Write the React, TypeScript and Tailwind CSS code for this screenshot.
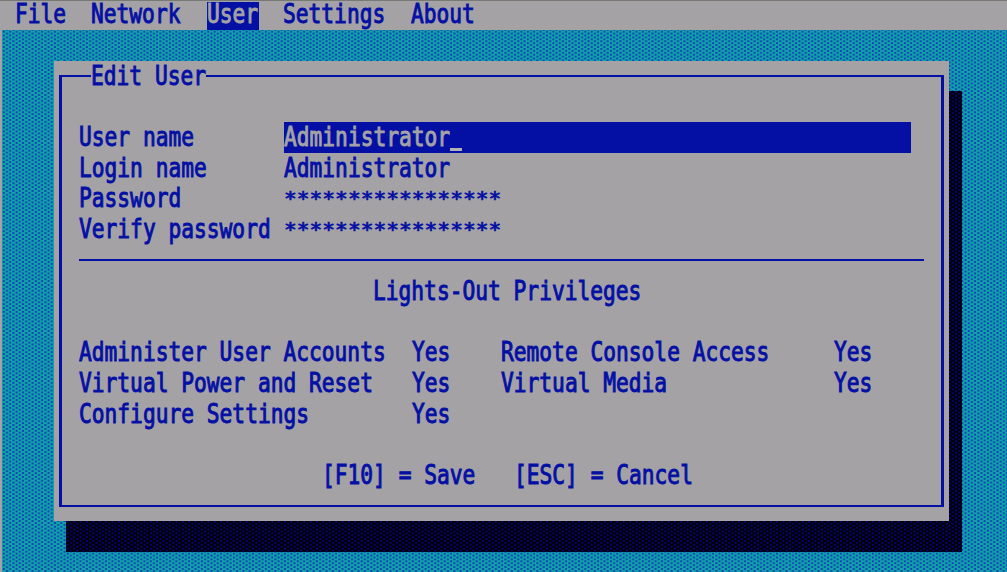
import React from "react";

const CELL = 12.78;

function T({ children, className = "" }: { children: string; className?: string }) {
  const masked = children.startsWith("*");
  return (
    <span className={`block h-[30.7px] shrink-0 ${className}`} style={{ width: children.length * CELL }}>
      <span
        className={`block whitespace-pre font-['DejaVu_Sans_Mono',monospace] text-[26.5px] leading-[27.5px] tracking-[0.02px] [-webkit-text-stroke:1px_currentColor] ${
          masked ? "origin-top-left translate-y-[4.5px] scale-x-[0.8] scale-y-[0.72]" : "origin-left scale-x-[0.8]"
        }`}
      >
        {children}
      </span>
    </span>
  );
}

function Dither({ id, base, dot }: { id: string; base: string; dot: string }) {
  return (
    <svg className="absolute inset-0 h-full w-full" aria-hidden="true">
      <defs>
        <pattern id={id} width="6.39" height="3.838" patternUnits="userSpaceOnUse">
          <rect width="6.39" height="3.838" fill={base} />
          <rect x="0.8" y="0" width="2" height="1.92" fill={dot} />
          <rect x="4" y="1.92" width="2" height="1.92" fill={dot} />
        </pattern>
      </defs>
      <rect width="100%" height="100%" fill={`url(#${id})`} />
    </svg>
  );
}

const fields = [
  ["User name", "Administrator"],
  ["Login name", "Administrator"],
  ["Password", "*****************"],
  ["Verify password", "*****************"],
];

const privileges = [
  ["Administer User Accounts", "Remote Console Access"],
  ["Virtual Power and Reset", "Virtual Media"],
  ["Configure Settings", ""],
];

export default function App() {
  return (
    <div className="relative h-[572px] w-[1007px] overflow-hidden bg-[#a4a2a4] text-[#0410a4]">
      <div className="absolute inset-y-0 right-0 left-[2px]">
        <Dither id="desktop" base="#10a4a8" dot="#1040b8" />
      </div>
      <nav className="relative flex h-[30px] border-t border-[#777a74] bg-[#a4a2a4] pl-[14.5px]">
        <T className="-mt-[1px]">File</T>
        <T className="-mt-[1px] ml-[25.6px]">Network</T>
        <div className="mt-px ml-[26.4px] h-[28px] w-[51.5px] bg-[#0410a4] text-[#a4a2a4]"><T className="-mt-[2px]">User</T></div>
        <T className="-mt-[1px] ml-[24.4px]">Settings</T>
        <T className="-mt-[1px] ml-[25.6px]">About</T>
      </nav>
      <div className="absolute top-[91px] left-[66px] h-[461px] w-[896px]">
        <Dither id="shadow" base="#000004" dot="#04047c" />
      </div>
      <main className="relative mt-[31px] ml-[54px] h-[460px] w-[895px] bg-[#a4a2a4] px-[5px] pt-[14px]">
        <fieldset className="relative h-[432px] w-[885px] border-x-[3px] border-y-2 border-[#0410a4]">
          <div className="absolute -top-[15px] left-[29px] bg-[#a4a2a4]"><T>Edit User</T></div>
          <div className="px-[17px] pt-[46px]">
            {fields.map(([label, value], i) => (
              <div key={label} className="flex h-[30.7px]">
                <div className="w-[204.5px]"><T>{label}</T></div>
                <div className={i === 0 ? "-mt-px flex h-[30.7px] w-[627px] bg-[#0410a4] pt-px text-[#a4a2a4]" : "flex"}>
                  <T>{value}</T>
                  {i === 0 && <span className="mt-[25px] h-[3px] w-[12px] bg-[#b4b2b4]" />}
                </div>
              </div>
            ))}
            <div className="mt-[13px] h-[2px] w-[845px] bg-[#0410a4]" />
            <div className="mt-[16px] pl-[294px]"><T>Lights-Out Privileges</T></div>
            <div className="mt-[30.7px]">
              {privileges.map(([left, right]) => (
                <div key={left} className="flex h-[30.7px]">
                  <div className="w-[333px]"><T>{left}</T></div>
                  <div className="w-[89px]"><T>Yes</T></div>
                  {right && <div className="w-[333.4px]"><T>{right}</T></div>}
                  {right && <T>Yes</T>}
                </div>
              ))}
            </div>
            <div className="mt-[30.7px] flex pl-[243px]">
              <T>[F10] = Save</T>
              <T className="ml-[38.3px]">[ESC] = Cancel</T>
            </div>
          </div>
        </fieldset>
      </main>
    </div>
  );
}
